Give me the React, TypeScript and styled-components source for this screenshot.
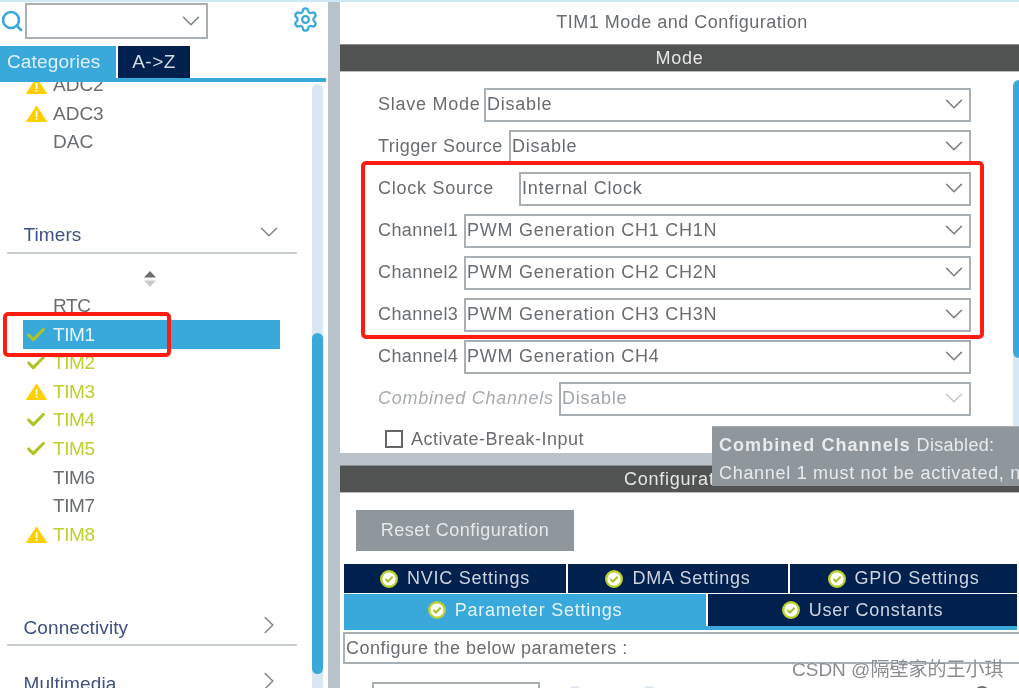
import React from 'react';
import styled, { createGlobalStyle } from 'styled-components';
import { Check, ChevronDown, ChevronRight, Search, Settings } from 'lucide-react';

const navy = '#00204e';
const blue = '#39a9dc';
const lime = '#bcd02f';
const gutter = '#b9c3c9';
const darkBar = '#505352';
const border = '#a9b0b5';
const textGray = '#6a6d70';

const GlobalStyle = createGlobalStyle`
    html, body {
        margin: 0;
        padding: 0;
        background: #fff;
    }
    * {
        box-sizing: border-box;
    }
`;

const Page = styled.div`
    position: relative;
    width: 1019px;
    height: 688px;
    overflow: hidden;
    display: flex;
    background: #fff;
    border-top: 2px solid #cfe8f5;
    font-family: 'Liberation Sans', Arial, sans-serif;
    font-size: 18px;
    letter-spacing: 0.75px;
    color: ${textGray};
    filter: blur(0.35px);
`;

/* ---------- left panel ---------- */

const Sidebar = styled.div`
    width: 328px;
    flex: none;
    display: flex;
    flex-direction: column;
`;

const SearchRow = styled.div`
    height: 44px;
    flex: none;
    display: flex;
    align-items: flex-start;
    padding: 1px 0 0 0;
`;

const SearchIcon = styled.div`
    width: 25px;
    height: 36px;
    display: flex;
    align-items: center;
    color: ${blue};
`;

const SearchCombo = styled.div`
    width: 183px;
    height: 36px;
    border: 2px solid ${border};
    display: flex;
    align-items: center;
    justify-content: flex-end;
    color: #808488;
`;

const GearIcon = styled.div`
    margin: 3px 0 0 84px;
    color: ${blue};
    display: flex;
`;

const SideTabs = styled.div`
    height: 36px;
    flex: none;
    display: flex;
    align-items: stretch;
    gap: 2px;
    width: 326px;
    border-bottom: 4px solid ${blue};
`;

const SideTab = styled.div<{ $active?: boolean; $width: number }>`
    width: ${(p) => p.$width}px;
    background: ${(p) => (p.$active ? blue : navy)};
    color: ${(p) => (p.$active ? '#dff1fa' : '#d5dbe5')};
    font-size: 19px;
    letter-spacing: ${(p) => (p.$active ? '0.15px' : '0.5px')};
    display: flex;
    align-items: center;
    justify-content: ${(p) => (p.$active ? 'flex-start' : 'center')};
    padding-left: ${(p) => (p.$active ? '7px' : '0')};
`;

const SideBody = styled.div`
    flex: 1;
    min-height: 0;
    display: flex;
`;

const ListClip = styled.div`
    width: 312px;
    flex: none;
    overflow: hidden;
`;

const ListInner = styled.div`
    margin-top: -11px;
    letter-spacing: 0;
`;

const TimerList = styled.div`
    letter-spacing: -0.4px;
`;

const Row = styled.div<{ $used?: boolean; $selected?: boolean }>`
    height: 28.6px;
    width: 257px;
    margin-left: 23px;
    display: flex;
    align-items: center;
    background: ${(p) => (p.$selected ? blue : 'transparent')};
    color: ${(p) => (p.$selected ? '#e4f4fb' : p.$used ? lime : textGray)};
    font-size: 19px;
`;

const RowIcon = styled.div`
    width: 30px;
    flex: none;
    display: flex;
    justify-content: center;
    padding-right: 4px;
`;

const SectionHeader = styled.div<{ $top: number }>`
    margin: ${(p) => p.$top}px 0 0 7px;
    width: 290px;
    height: 30px;
    padding: 0 13px 5px 16.5px;
    display: flex;
    align-items: center;
    justify-content: space-between;
    border-bottom: 2px solid #c9ced6;
    color: #3f5183;
    font-size: 19px;
    letter-spacing: 0.1px;
    svg {
        color: #858a8f;
        margin-bottom: 6px;
    }
`;

const SortMark = styled.div`
    height: 38px;
    padding: 16px 0 0 143px;
    display: flex;
`;

const Track = styled.div`
    width: 11px;
    flex: none;
    margin-top: 2px;
    background: #d9e7f4;
    border-radius: 6px 6px 0 0;
    padding-top: 249px;
`;

const Thumb = styled.div`
    height: 341px;
    background: ${blue};
    border-radius: 6px;
`;

const Gutter = styled.div`
    width: 12px;
    flex: none;
    background: ${gutter};
`;

/* ---------- right panel ---------- */

const Main = styled.div`
    flex: 1;
    min-width: 0;
    display: flex;
    flex-direction: column;
`;

const Title = styled.div`
    height: 42px;
    flex: none;
    display: flex;
    align-items: center;
    justify-content: center;
    padding: 0 0 2px 5px;
    letter-spacing: 0.5px;
`;

const DarkBar = styled.div<{ $shift?: number }>`
    height: 28px;
    flex: none;
    background: ${darkBar};
    border-top: 1px solid #8c8f8f;
    border-bottom: 1px solid #bbb;
    color: #e6e6e6;
    padding-left: ${(p) => p.$shift ?? 0}px;
    display: flex;
    align-items: center;
    justify-content: center;
`;

const ModeBody = styled.div`
    height: 381px;
    flex: none;
    display: flex;
    justify-content: space-between;
`;

const ModeFields = styled.div`
    width: 631px;
    padding: 16px 0 0 38px;
    display: flex;
    flex-direction: column;
    gap: 8px;
`;

const FieldRow = styled.div`
    height: 34px;
    flex: none;
    display: flex;
    align-items: center;
`;

const FieldLabel = styled.div<{ $width: number; $spacing: number; $disabled?: boolean }>`
    width: ${(p) => p.$width}px;
    flex: none;
    margin-bottom: 2px;
    white-space: nowrap;
    letter-spacing: ${(p) => p.$spacing}px;
    color: ${(p) => (p.$disabled ? '#a8acaf' : textGray)};
    font-style: ${(p) => (p.$disabled ? 'italic' : 'normal')};
`;

const Select = styled.div<{ $disabled?: boolean }>`
    flex: 1;
    height: 34px;
    border: 2px solid ${border};
    padding: 0 0 2px 1px;
    display: flex;
    align-items: center;
    justify-content: space-between;
    color: ${(p) => (p.$disabled ? '#a0a5a9' : textGray)};
    svg {
        color: ${(p) => (p.$disabled ? '#c4c8cb' : '#7b7f83')};
    }
`;

const CheckLine = styled.label`
    display: flex;
    align-items: center;
    gap: 8px;
    margin: 6px 0 0 7px;
    height: 18px;
    letter-spacing: 0.5px;
`;

const CheckBox = styled.span`
    width: 18px;
    height: 18px;
    border: 2px solid #666;
`;

const ModeScroll = styled.div`
    width: 6px;
    margin-top: 8px;
    background: #d9e7f4;
    border-radius: 6px 0 0 0;
`;

const ModeThumb = styled.div`
    height: 278px;
    background: ${blue};
    border-radius: 6px 0 0 6px;
`;

const Splitter = styled.div`
    height: 12px;
    flex: none;
    background: ${gutter};
`;

const ConfigBody = styled.div`
    flex: 1;
    min-height: 0;
    padding: 17px 0 0 3px;
    display: flex;
    flex-direction: column;
    & > * {
        flex: none;
    }
`;

const ResetButton = styled.button`
    width: 218px;
    height: 41px;
    margin: 0 0 13px 13px;
    background: #90979c;
    border: 0;
    color: #e6e8e9;
    font: inherit;
    letter-spacing: 0.5px;
`;

const TabRow = styled.div<{ $underline?: boolean }>`
    display: flex;
    gap: 2px;
    width: 673px;
    margin: 0 0 1px 1px;
    border-bottom: ${(p) => (p.$underline ? `4px solid ${blue}` : '0')};
`;

const ConfigTab = styled.div<{ $active?: boolean; $width: number; $height: number }>`
    width: ${(p) => p.$width}px;
    height: ${(p) => p.$height}px;
    background: ${(p) => (p.$active ? blue : navy)};
    color: ${(p) => (p.$active ? '#e4f4fb' : '#cdd4df')};
    display: flex;
    align-items: center;
    justify-content: center;
    gap: 9px;
`;

const HintBox = styled.div`
    height: 32px;
    width: 680px;
    margin-top: 1px;
    border: 2px solid ${border};
    padding-left: 1px;
    display: flex;
    align-items: center;
    letter-spacing: 0.49px;
`;

const ParamRow = styled.div`
    margin: 18px 0 0 29px;
    display: flex;
    align-items: flex-start;
`;

const ParamInput = styled.div`
    width: 168px;
    height: 20px;
    border: 2px solid ${border};
`;

const Radio = styled.div<{ $gap: number; $dark?: boolean }>`
    width: 16px;
    height: 16px;
    margin: 4px 0 0 ${(p) => p.$gap}px;
    border-radius: 50%;
    background: ${(p) => (p.$dark ? '#6a6d70' : '#d9e7f4')};
`;

/* ---------- things lying over the page ---------- */

const Tooltip = styled.div`
    position: absolute;
    left: 712px;
    top: 424px;
    width: 320px;
    height: 60px;
    padding: 4px 0 0 7px;
    background: #90979c;
    border-top: 1px solid #a8adb1;
    color: #e8eaeb;
    white-space: nowrap;
    line-height: 28px;
    letter-spacing: 0.7px;
    b {
        letter-spacing: 1.05px;
    }
`;

const TooltipNote = styled.span`
    letter-spacing: 0.3px;
`;

const RedFrame = styled.div<{ $left: number; $top: number; $width: number; $height: number }>`
    position: absolute;
    left: ${(p) => p.$left}px;
    top: ${(p) => p.$top}px;
    width: ${(p) => p.$width}px;
    height: ${(p) => p.$height}px;
    border: 4px solid #ff1c10;
    border-radius: 5px;
`;

const Watermark = styled.div`
    position: absolute;
    left: 792px;
    top: 652px;
    font-family: 'Liberation Sans', 'Noto Sans CJK SC', sans-serif;
    font-size: 19px;
    letter-spacing: 0;
    color: #8a8d90;
    text-shadow: 0 0 1px #fff;
    white-space: nowrap;
`;

const Warning = () => (
    <svg width="21" height="17" viewBox="0 0 21 17">
        <path d="M10.5 1 L20.5 16.5 L0.5 16.5 Z" fill="#ffd000" stroke="#ffd000" strokeLinejoin="round" />
        <rect x="9.7" y="6" width="1.7" height="6" fill="#fff" />
        <rect x="9.7" y="13" width="1.7" height="1.8" fill="#fff" />
    </svg>
);

const Tick = () => <Check size={22} strokeWidth={3.4} color="#aec422" />;

const SortIcon = () => (
    <svg width="14" height="18" viewBox="0 0 14 18">
        <path d="M7 1 L13 7.5 L1 7.5 Z" fill="#6a6d70" />
        <path d="M7 17 L13 10.5 L1 10.5 Z" fill="#c9cccf" />
    </svg>
);

const OkBadge = () => (
    <svg width="18" height="18" viewBox="0 0 18 18">
        <circle cx="9" cy="9" r="7.8" fill="#fff" stroke="#bcd02f" strokeWidth="2.4" />
        <path d="M5.4 9 L8 11.5 L12.6 6.8" fill="none" stroke="#a9bf22" strokeWidth="2" />
    </svg>
);

const scrolledRows = [
    { name: 'ADC2', state: 'warn' },
    { name: 'ADC3', state: 'warn' },
    { name: 'DAC', state: '' },
];

const timerRows = [
    { name: 'RTC', state: '' },
    { name: 'TIM1', state: 'ok', selected: true },
    { name: 'TIM2', state: 'ok', used: true },
    { name: 'TIM3', state: 'warn', used: true },
    { name: 'TIM4', state: 'ok', used: true },
    { name: 'TIM5', state: 'ok', used: true },
    { name: 'TIM6', state: '' },
    { name: 'TIM7', state: '' },
    { name: 'TIM8', state: 'warn', used: true },
];

const fields = [
    { label: 'Slave Mode', width: 106, spacing: 0.75, value: 'Disable' },
    { label: 'Trigger Source', width: 131, spacing: 0.45, value: 'Disable' },
    { label: 'Clock Source', width: 141, spacing: 0.75, value: 'Internal Clock' },
    { label: 'Channel1', width: 86, spacing: 0.4, value: 'PWM Generation CH1 CH1N' },
    { label: 'Channel2', width: 86, spacing: 0.4, value: 'PWM Generation CH2 CH2N' },
    { label: 'Channel3', width: 86, spacing: 0.4, value: 'PWM Generation CH3 CH3N' },
    { label: 'Channel4', width: 86, spacing: 0.4, value: 'PWM Generation CH4' },
    { label: 'Combined Channels', width: 181, spacing: 0.75, value: 'Disable', disabled: true },
];

type RowData = { name: string; state: string; used?: boolean; selected?: boolean };

const ListRow = ({ row }: { row: RowData }) => (
    <Row $used={row.used} $selected={row.selected}>
        <RowIcon>
            {row.state === 'warn' && <Warning />}
            {row.state === 'ok' && <Tick />}
        </RowIcon>
        {row.name}
    </Row>
);

const App = () => {
    return (
        <Page>
            <GlobalStyle />
            <Sidebar>
                <SearchRow>
                    <SearchIcon>
                        <Search size={24} strokeWidth={2.6} />
                    </SearchIcon>
                    <SearchCombo>
                        <ChevronDown size={30} strokeWidth={1.3} />
                    </SearchCombo>
                    <GearIcon>
                        <Settings size={27} strokeWidth={2} />
                    </GearIcon>
                </SearchRow>
                <SideTabs>
                    <SideTab $active $width={116}>Categories</SideTab>
                    <SideTab $width={72}>A-&gt;Z</SideTab>
                </SideTabs>
                <SideBody>
                    <ListClip>
                        <ListInner>
                            {scrolledRows.map((row) => (
                                <ListRow key={row.name} row={row} />
                            ))}
                            <SectionHeader $top={67}>
                                Timers
                                <ChevronDown size={30} strokeWidth={1.3} />
                            </SectionHeader>
                            <SortMark>
                                <SortIcon />
                            </SortMark>
                            <TimerList>
                                {timerRows.map((row) => (
                                    <ListRow key={row.name} row={row} />
                                ))}
                            </TimerList>
                            <SectionHeader $top={67}>
                                Connectivity
                                <ChevronRight size={30} strokeWidth={1.3} />
                            </SectionHeader>
                            <SectionHeader $top={26}>
                                Multimedia
                                <ChevronRight size={30} strokeWidth={1.3} />
                            </SectionHeader>
                        </ListInner>
                    </ListClip>
                    <Track>
                        <Thumb />
                    </Track>
                </SideBody>
            </Sidebar>
            <Gutter />
            <Main>
                <Title>TIM1 Mode and Configuration</Title>
                <DarkBar>Mode</DarkBar>
                <ModeBody>
                    <ModeFields>
                        {fields.map((f) => (
                            <FieldRow key={f.label}>
                                <FieldLabel $width={f.width} $spacing={f.spacing} $disabled={f.disabled}>{f.label}</FieldLabel>
                                <Select $disabled={f.disabled}>
                                    {f.value}
                                    <ChevronDown size={30} strokeWidth={1.3} />
                                </Select>
                            </FieldRow>
                        ))}
                        <CheckLine>
                            <CheckBox />
                            Activate-Break-Input
                        </CheckLine>
                    </ModeFields>
                    <ModeScroll>
                        <ModeThumb />
                    </ModeScroll>
                </ModeBody>
                <Splitter />
                <DarkBar $shift={6}>Configuration</DarkBar>
                <ConfigBody>
                    <ResetButton>Reset Configuration</ResetButton>
                    <TabRow>
                        <ConfigTab $width={222} $height={29}><OkBadge />NVIC Settings</ConfigTab>
                        <ConfigTab $width={220} $height={29}><OkBadge />DMA Settings</ConfigTab>
                        <ConfigTab $width={227} $height={29}><OkBadge />GPIO Settings</ConfigTab>
                    </TabRow>
                    <TabRow $underline>
                        <ConfigTab $active $width={362} $height={32}><OkBadge />Parameter Settings</ConfigTab>
                        <ConfigTab $width={309} $height={32}><OkBadge />User Constants</ConfigTab>
                    </TabRow>
                    <HintBox>Configure the below parameters :</HintBox>
                    <ParamRow>
                        <ParamInput />
                        <Radio $gap={27} />
                        <Radio $gap={58} />
                        <Radio $gap={317} $dark />
                    </ParamRow>
                </ConfigBody>
            </Main>
            <Tooltip>
                <b>Combined Channels</b> <TooltipNote>Disabled:</TooltipNote>
                <br />
                Channel 1 must not be activated, nor Channel 2
            </Tooltip>
            <RedFrame $left={361} $top={159} $width={623} $height={178} />
            <RedFrame $left={3} $top={310} $width={168} $height={45} />
            <Watermark>CSDN @隔壁家的王小琪</Watermark>
        </Page>
    );
};

export default App;
